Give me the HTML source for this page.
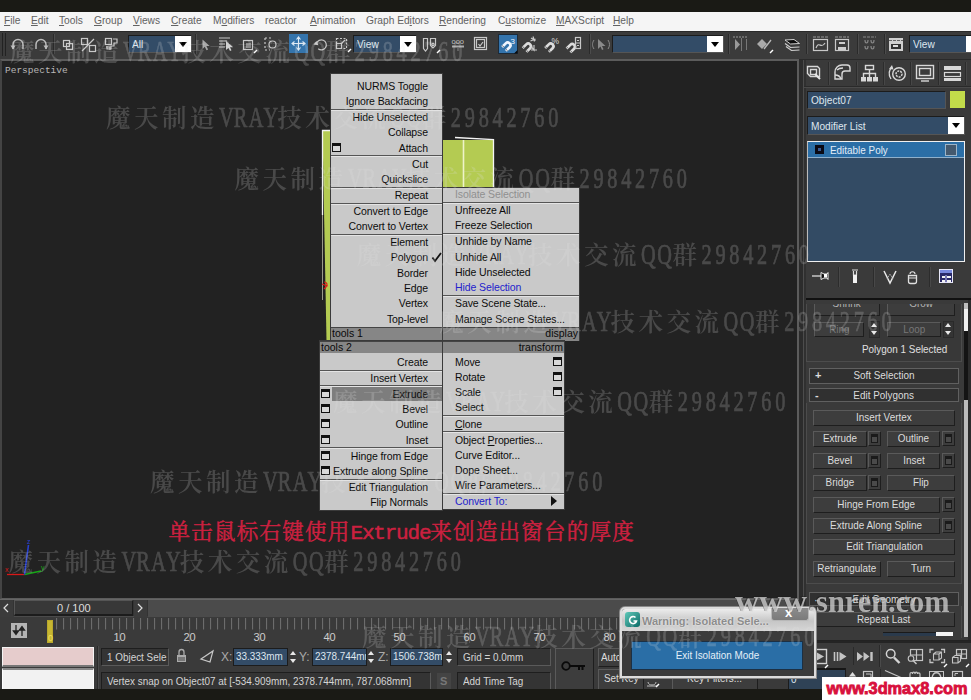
<!DOCTYPE html><html><head><meta charset="utf-8"><title>3ds Max</title><style>
*{box-sizing:border-box;margin:0;padding:0}
html,body{width:971px;height:700px;overflow:hidden;background:#222}
body{position:relative;font-family:"Liberation Sans",sans-serif;font-size:11px;color:#d8d8d8}
.a{position:absolute}
.t{position:absolute;white-space:nowrap;line-height:14px}
.mb span{position:absolute;top:1px;line-height:16px;color:#626262;font-size:10.2px;white-space:nowrap}
.mb u{text-decoration:underline}
.dd{position:absolute;background:#334c67;border:1px solid #1c1c1c;border-right-color:#555;border-bottom-color:#555}
.dd .ar{position:absolute;right:0;top:0;bottom:0;width:16px;background:#fff}
.dd .ar:after{content:"";position:absolute;left:4px;top:6px;border:4px solid transparent;border-top:5px solid #000;border-bottom:0}
.dd .tx{position:absolute;left:3px;top:1px;color:#dfe6ee;font-size:11px;line-height:14px;transform:scaleX(.92);transform-origin:left}
.qm{position:absolute;background:#c9c9c9;border:1px solid #3a3a3a;color:#0c0c0c;font-size:10.5px}
.qm .i{position:absolute;white-space:nowrap;line-height:14px;letter-spacing:-0.1px}
.qm .s{position:absolute;left:0;right:0;height:2px;background:#555;border-bottom:1px solid #e4e4e4}
.qm .ti{position:absolute;left:0;right:0;background:#868686;color:#0a0a0a;font-size:10.5px;line-height:11px;border-top:1px solid #444}
.qm .bx{position:absolute;width:9px;height:9px;border:1px solid #111;border-top:3px solid #111;background:#d8d8d8}
.btn{position:absolute;background:#3d3d3d;border:1px solid #5a5a5a;border-right-color:#1e1e1e;border-bottom-color:#1e1e1e;color:#dcdcdc;text-align:center;font-size:11px;line-height:13px;white-space:nowrap;overflow:hidden}
.sb{position:absolute;background:#3d3d3d;border:1px solid #5a5a5a;border-right-color:#1e1e1e;border-bottom-color:#1e1e1e}
.sb:after{content:"";position:absolute;left:2px;top:2px;right:2px;bottom:2px;border:1px solid #1a1a1a;border-top:3px solid #1a1a1a;background:#4a4a4a}
.ro{position:absolute;background:#303030;border:1px solid #606060;color:#dcdcdc;text-align:center;font-size:11px;line-height:12px}
.ro b{position:absolute;left:5px;top:0;font-weight:bold}
.fld{position:absolute;background:#343434;border:1px solid #1e1e1e;border-right-color:#5a5a5a;border-bottom-color:#5a5a5a;color:#d4d4d4;font-size:11px;line-height:16px;white-space:nowrap;overflow:hidden;padding-left:5px}
.num{position:absolute;background:#334c67;border:1px solid #1c1c1c;color:#dfe6ee;font-size:11px;line-height:15px;white-space:nowrap;overflow:hidden;padding-left:2px}
.sp{position:absolute;width:7px;height:14px}
.sp:before{content:"";position:absolute;left:0;top:1px;border:3.5px solid transparent;border-bottom:4px solid #e8e8e8;border-top:0}
.sp:after{content:"";position:absolute;left:0;bottom:1px;border:3.5px solid transparent;border-top:4px solid #e8e8e8;border-bottom:0}
.n{display:inline-block;transform:scaleX(.9)}
</style></head><body>
<div class="a" style="left:0;top:0;width:971px;height:12px;background:#1a1a15"></div>
<div class="a mb" style="left:0;top:12px;width:971px;height:19px;background:#f5f5f5">
<span style="left:4px"><u>F</u>ile</span>
<span style="left:31px"><u>E</u>dit</span>
<span style="left:59px"><u>T</u>ools</span>
<span style="left:94px"><u>G</u>roup</span>
<span style="left:133px"><u>V</u>iews</span>
<span style="left:171px"><u>C</u>reate</span>
<span style="left:213px">M<u>o</u>difiers</span>
<span style="left:265px">reactor</span>
<span style="left:310px"><u>A</u>nimation</span>
<span style="left:366px">Graph Ed<u>i</u>tors</span>
<span style="left:439px"><u>R</u>endering</span>
<span style="left:498px">C<u>u</u>stomize</span>
<span style="left:556px"><u>M</u>AXScript</span>
<span style="left:613px"><u>H</u>elp</span>
</div>
<div class="a" style="left:0;top:31px;width:971px;height:28px;background:#3b3b3b;border-top:1px solid #2a2a2a"></div>
<div class="a" style="left:0;top:59px;width:799px;height:540px;background:#222;border:2px solid #5c5c5c;border-left:2px solid #444;border-bottom-width:1px"></div>
<div class="t" style="left:5px;top:64px;font-family:'Liberation Mono',monospace;font-size:9.5px;color:#b8b8b8">Perspective</div>
<svg class="a" style="left:300px;top:120px" width="220" height="230" viewBox="300 120 220 230"><path d="M322.500 130.500H331V341H326.500z" fill="#b4cb52"/><path d="M322.5 215V130.5H331" fill="none" stroke="#f2f2f2" stroke-width="1.3"/><path d="M322.5 215V300" fill="none" stroke="#9a9a8a" stroke-width="1"/><rect x="442" y="140" width="51" height="48" fill="#b4cb52"/><path d="M463.5 140V188" stroke="#eef3c8" stroke-width="1.6"/><path d="M455 137.5L493.5 139.5V187" fill="none" stroke="#f4f4f4" stroke-width="1.3"/><path d="M322 284l5 2-3 3M324 282c3 0 4 3 2 5" fill="none" stroke="#e01818" stroke-width="1.2"/></svg>
<svg class="a" style="left:2px;top:538px" width="50" height="42" viewBox="2 538 50 42"><path d="M24.500 574.500H7" stroke="#d81818" stroke-width="1.300"/><path d="M24.500 574.500L41 571" stroke="#18a818" stroke-width="1.300"/><path d="M24.500 574.500L28.500 545" stroke="#2840d0" stroke-width="1.600"/><text x="5" y="572" font-family="Liberation Sans,sans-serif" font-size="7" fill="#d81818">x</text><text x="41" y="570" font-family="Liberation Sans,sans-serif" font-size="7" fill="#18a818">y</text><text x="27" y="544" font-family="Liberation Sans,sans-serif" font-size="7" fill="#2840d0">z</text></svg>
<div class="qm" style="left:330px;top:73px;width:113px;height:268px">
<div class="i" style="top:5px;right:14px;">NURMS Toggle</div>
<div class="i" style="top:20px;right:14px;">Ignore Backfacing</div>
<div class="s" style="top:35px"></div>
<div class="i" style="top:36px;right:14px;">Hide Unselected</div>
<div class="i" style="top:51px;right:14px;">Collapse</div>
<div class="i" style="top:67px;right:14px;">Attach</div>
<div class="bx" style="left:1px;top:69px"></div>
<div class="s" style="top:81px"></div>
<div class="i" style="top:83px;right:14px;">Cut</div>
<div class="i" style="top:98px;right:14px;">Quickslice</div>
<div class="s" style="top:113px"></div>
<div class="i" style="top:114px;right:14px;">Repeat</div>
<div class="s" style="top:129px"></div>
<div class="i" style="top:130px;right:14px;">Convert to Edge</div>
<div class="i" style="top:145px;right:14px;">Convert to Vertex</div>
<div class="s" style="top:160px"></div>
<div class="i" style="top:161px;right:14px;">Element</div>
<div class="i" style="top:176px;right:14px;">Polygon</div>
<div class="i" style="top:192px;right:14px;">Border</div>
<div class="i" style="top:207px;right:14px;">Edge</div>
<div class="i" style="top:222px;right:14px;">Vertex</div>
<div class="i" style="top:238px;right:14px;">Top-level</div>
<div class="ti" style="top:253px;height:14px;text-align:left;padding:0 1px">tools 1</div>
</div>
<svg class="a" style="left:431px;top:251px" width="12" height="12" viewBox="0 0 12 12"><path d="M1.5 6.5L4 10L10 2" fill="none" stroke="#111" stroke-width="1.8"/></svg>
<div class="qm" style="left:442px;top:187px;width:138px;height:154px">
<div class="i" style="top:-1px;left:12px;color:#909090;">Isolate Selection</div>
<div class="s" style="top:14px"></div>
<div class="i" style="top:15px;left:12px;">Unfreeze All</div>
<div class="i" style="top:30px;left:12px;">Freeze Selection</div>
<div class="s" style="top:45px"></div>
<div class="i" style="top:46px;left:12px;">Unhide by Name</div>
<div class="i" style="top:62px;left:12px;">Unhide All</div>
<div class="i" style="top:77px;left:12px;">Hide Unselected</div>
<div class="i" style="top:92px;left:12px;color:#2222cc;">Hide Selection</div>
<div class="s" style="top:107px"></div>
<div class="i" style="top:108px;left:12px;">Save Scene State...</div>
<div class="i" style="top:124px;left:12px;">Manage Scene States...</div>
<div class="ti" style="top:139px;height:14px;text-align:right;padding:0 1px">display</div>
</div>
<div class="qm" style="left:319px;top:340px;width:124px;height:171px">
<div class="ti" style="top:0px;height:12px;text-align:left;padding:0 1px">tools 2</div>
<div class="i" style="top:14px;right:14px;">Create</div>
<div class="s" style="top:29px"></div>
<div class="i" style="top:30px;right:14px;">Insert Vertex</div>
<div class="s" style="top:44px"></div>
<div class="a" style="left:12px;right:0;top:46px;height:14px;background:#7d7d7d"></div>
<div class="i" style="top:46px;right:14px;">Extrude</div>
<div class="bx" style="left:1px;top:48px"></div>
<div class="i" style="top:61px;right:14px;">Bevel</div>
<div class="bx" style="left:1px;top:63px"></div>
<div class="i" style="top:76px;right:14px;">Outline</div>
<div class="bx" style="left:1px;top:78px"></div>
<div class="i" style="top:92px;right:14px;">Inset</div>
<div class="bx" style="left:1px;top:94px"></div>
<div class="s" style="top:106px"></div>
<div class="i" style="top:108px;right:14px;">Hinge from Edge</div>
<div class="bx" style="left:1px;top:110px"></div>
<div class="i" style="top:123px;right:14px;">Extrude along Spline</div>
<div class="bx" style="left:1px;top:125px"></div>
<div class="s" style="top:138px"></div>
<div class="i" style="top:139px;right:14px;">Edit Triangulation</div>
<div class="i" style="top:154px;right:14px;">Flip Normals</div>
</div>
<div class="qm" style="left:442px;top:340px;width:123px;height:170px">
<div class="ti" style="top:0px;height:12px;text-align:right;padding:0 1px">transform</div>
<div class="i" style="top:14px;left:12px;">Move</div>
<div class="bx" style="right:2px;top:16px"></div>
<div class="i" style="top:29px;left:12px;">Rotate</div>
<div class="bx" style="right:2px;top:31px"></div>
<div class="i" style="top:44px;left:12px;">Scale</div>
<div class="bx" style="right:2px;top:46px"></div>
<div class="i" style="top:59px;left:12px;">Select</div>
<div class="s" style="top:74px"></div>
<div class="i" style="top:76px;left:12px;"><u>C</u>lone</div>
<div class="s" style="top:90px"></div>
<div class="i" style="top:92px;left:12px;">Object <u>P</u>roperties...</div>
<div class="i" style="top:107px;left:12px;">Curve Editor...</div>
<div class="i" style="top:122px;left:12px;">Dope Sheet...</div>
<div class="i" style="top:137px;left:12px;">Wire Parameters...</div>
<div class="s" style="top:152px"></div>
<div class="i" style="top:153px;left:12px;color:#2222cc;">Convert To:</div>
</div>
<div class="a" style="left:551px;top:496px;border:5px solid transparent;border-left:6px solid #111;border-right:0"></div>
<svg class="a" style="left:160px;top:512px" width="490" height="36" viewBox="160 512 490 36">
<text y="538.500" font-size="21.500" fill="#cc2040" stroke="#cc2040" stroke-width="0.500" font-family="'Liberation Serif','Noto Serif CJK SC',serif"><tspan x="168.5 191.2 214.0 236.8 259.5 282.2 305.0 327.8">单击鼠标右键使用</tspan><tspan font-size="21" font-family="'Liberation Mono',monospace" x="350.5 361.9 373.3 384.7 396.1 407.5 418.9">Extrude</tspan><tspan x="430.3 453.0 475.8 498.5 521.3 544.0 566.8 589.5 612.3">来创造出窗台的厚度</tspan></text>
</svg>
<div class="dd" style="left:128px;top:35px;width:64px;height:18px"><span class="tx">All</span><span class="ar"></span></div>
<div class="dd" style="left:353px;top:35px;width:64px;height:18px"><span class="tx">View</span><span class="ar"></span></div>
<div class="dd" style="left:612px;top:35px;width:112px;height:18px"><span class="ar"></span></div>
<div class="dd" style="left:909px;top:35px;width:62px;height:18px;border-right:0"><span class="tx">View</span><span class="a" style="right:0;top:0;bottom:0;width:5px;background:#fff"></span></div>
<div class="a" style="left:289px;top:34px;width:19px;height:19px;background:#3474ac"></div>
<div class="a" style="left:498px;top:34px;width:20px;height:20px;background:#3474ac;border:1px solid #1c2a38"></div>
<div class="a" style="left:2px;top:33px;width:1px;height:23px;background:#222"></div><div class="a" style="left:5px;top:33px;width:1px;height:23px;background:#222"></div>
<svg class="a" style="left:0;top:30px" width="971" height="29" viewBox="0 30 971 29">
<path d="M13 49v-4.500a5 5 0 0 1 10 0v4.500" stroke="#bcbcbc" fill="none" stroke-width="1.500"/><path d="M10.500 45.500l2.500 4 2.500-4z" fill="#bcbcbc"/>
<path d="M36 49v-4.500a5 5 0 0 1 10 0v4.500" stroke="#bcbcbc" fill="none" stroke-width="1.500"/><path d="M43.500 45.500l2.500 4 2.500-4z" fill="#bcbcbc"/>
<rect x="63.5" y="40.500" width="6" height="6" stroke="#c8c8c8" fill="none" stroke-width="1.200"/><rect x="66.500" y="43.500" width="6" height="6" stroke="#c8c8c8" fill="none" stroke-width="1.200"/>
<rect x="81.500" y="38.500" width="6" height="6" stroke="#c8c8c8" fill="none" stroke-width="1.200"/><rect x="89.500" y="45.500" width="6" height="6" stroke="#c8c8c8" fill="none" stroke-width="1.200"/><path d="M94 39L82 51" stroke="#c8c8c8" fill="none" stroke-width="1.200"/>
<rect x="105.500" y="38.500" width="6" height="6" stroke="#c8c8c8" fill="none" stroke-width="1.200"/><path d="M113 39h4v4h-3v3h-3v3h-4v-3" stroke="#c8c8c8" fill="none" stroke-width="1.200"/><path d="M106 47h4v3" stroke="#c8c8c8" fill="none" stroke-width="1.200"/>
<path d="M202.500 39.500v9.500l2.300-2.200 1.700 3.400 1.600-.8-1.700-3.300h3.200z" fill="#a8a8a8"/>
<path d="M219 38h11M219 41h8M219 44h6M219 47h6" stroke="#c8c8c8" fill="none" stroke-width="1.200"/><path d="M226 41v9l2.500-2 1.500 3 1.500-.7-1.500-3h3z" fill="#d0d0d0"/>
<rect x="243.500" y="40.500" width="9" height="9" stroke="#c8c8c8" fill="none" stroke-width="1.200"/><rect x="246" y="43" width="5" height="5" fill="#888"/><path d="M254 53l3-3" stroke="#fff" stroke-width="1.500"/>
<path d="M265 38v12M265 38h8M265 50h5" stroke="#c8c8c8" fill="none" stroke-width="1.200" stroke-dasharray="2 2"/><circle cx="272.500" cy="44.500" r="3.500" stroke="#c8c8c8" fill="none" stroke-width="1.200"/>
<path d="M298.500 37.500v12M292.500 43.500h12M296.500 39.500l2-2.500 2 2.500M296.500 47.500l2 2.500 2-2.500M294.500 41.500l-2.500 2 2.500 2M302.500 41.500l2.500 2-2.500 2" stroke="#dce8f4" fill="none" stroke-width="1.100"/>
<path d="M316.500 43.500a5 5 0 1 1 1.700 5.300" stroke="#c8c8c8" fill="none" stroke-width="1.200"/><path d="M313.500 44.500l3-3.500 2 4.200z" fill="#c8c8c8"/>
<rect x="336.500" y="38.500" width="10" height="10" stroke="#c8c8c8" fill="none" stroke-width="1.200" stroke-dasharray="2 1.500"/><rect x="336.500" y="43.500" width="5" height="5" stroke="#c8c8c8" fill="none" stroke-width="1.200"/><path d="M341 44l4-4" stroke="#c8c8c8" fill="none" stroke-width="1.200"/><path d="M348 52l3-3" stroke="#fff" stroke-width="1.500"/>
<path d="M423.500 38.500h4v10l-2 2.500-2-2.500z" stroke="#c8c8c8" fill="none" stroke-width="1.200" stroke="#a4a4a4"/><path d="M430.500 38.500h5v7l-2.500 2.500-2.500-2.500z" stroke="#c8c8c8" fill="none" stroke-width="1.200" stroke="#a4a4a4"/><circle cx="433" cy="44.500" r="1.200" stroke="#c8c8c8" fill="none" stroke-width="1.200" stroke="#a4a4a4" stroke-width="0.800"/><path d="M437 53l3-3" stroke="#fff" stroke-width="1.500"/>
<text x="451.500" y="43.500" font-size="7.500" fill="#c4c4c4" font-family="Liberation Sans,sans-serif">ooo</text><path d="M452 46.500h12" stroke="#aaa" stroke-width="2" fill="none"/><path d="M458 48v3" stroke="#888" fill="none"/>
<rect x="474.500" y="37.500" width="12" height="12" stroke="#c8c8c8" fill="none" stroke-width="1.200" stroke="#bbb"/><rect x="476.500" y="39.500" width="8" height="8" stroke="#c8c8c8" fill="none" stroke-width="1.200" stroke="#aaa"/><path d="M478.500 44l1.500 2 3-4" stroke="#c8c8c8" fill="none" stroke-width="1.200" stroke="#888" stroke-width="1"/>
<g transform="translate(507 46) rotate(45)"><path d="M-2.700 4.200V-1a2.700 2.700 0 0 1 5.400 0V4.200" stroke="#f0f6ff" fill="none" stroke-width="2.700"/><path d="M-4 3h2.600M1.400 3h2.600" stroke="#555" stroke-width="0.800"/></g>
<text x="510.500" y="44" font-size="8" fill="#f0f6ff" font-family="Liberation Sans,sans-serif">3</text><path d="M514 53.500l3.500-3.500v3.500z" fill="#0a0a0a"/>
<g transform="translate(527.5 47) rotate(45)"><path d="M-2.700 4.200V-1a2.700 2.700 0 0 1 5.400 0V4.200" stroke="#dcdcdc" fill="none" stroke-width="2.700"/><path d="M-4 3h2.600M1.400 3h2.600" stroke="#555" stroke-width="0.800"/></g>
<path d="M533 36.500l1.500 5M531 38l4.500 2.500M530.500 41l5-2M531 50h6M534 45v5l-2.500-3" stroke="#c8c8c8" fill="none" stroke-width="1.200" stroke-width="1"/>
<g transform="translate(550 47) rotate(45)"><path d="M-2.700 4.200V-1a2.700 2.700 0 0 1 5.400 0V4.200" stroke="#dcdcdc" fill="none" stroke-width="2.700"/><path d="M-4 3h2.600M1.400 3h2.600" stroke="#555" stroke-width="0.800"/></g>
<text x="551.500" y="44" font-size="8.500" fill="#ddd" font-family="Liberation Sans,sans-serif">%</text>
<g transform="translate(571.5 47.5) rotate(45)"><path d="M-2.700 4.200V-1a2.700 2.700 0 0 1 5.400 0V4.200" stroke="#dcdcdc" fill="none" stroke-width="2.700"/><path d="M-4 3h2.600M1.400 3h2.600" stroke="#555" stroke-width="0.800"/></g>
<rect x="575.500" y="37.500" width="5" height="11" stroke="#c8c8c8" fill="none" stroke-width="1.200" stroke-width="1"/><path d="M576 43h5M577 40.500h2M577 45.500h2" stroke="#c8c8c8" fill="none" stroke-width="1.200" stroke-width="1"/>
<path d="M594 40c-2 3-2 6 0 9M608 40c2 3 2 6 0 9" stroke="#8a8a8a" fill="none"/><path d="M598 39v10l2.500-2.500 1.500 3.500 1.500-.7-1.500-3.300h3.500z" fill="#8a8a8a"/>
<path d="M53.5 34v20" stroke="#2a2a2a"/><path d="M54.5 34v20" stroke="#4c4c4c"/>
<path d="M195.5 34v20" stroke="#2a2a2a"/><path d="M196.5 34v20" stroke="#4c4c4c"/>
<path d="M589.5 34v20" stroke="#2a2a2a"/><path d="M590.5 34v20" stroke="#4c4c4c"/>
<path d="M728.5 34v20" stroke="#2a2a2a"/><path d="M729.5 34v20" stroke="#4c4c4c"/>
<path d="M806.5 34v20" stroke="#2a2a2a"/><path d="M807.5 34v20" stroke="#4c4c4c"/>
<path d="M857.5 34v20" stroke="#2a2a2a"/><path d="M858.5 34v20" stroke="#4c4c4c"/>
<path d="M884.5 34v20" stroke="#2a2a2a"/><path d="M885.5 34v20" stroke="#4c4c4c"/>
<path d="M733 37h14" stroke="#999" stroke-dasharray="2 1"/><path d="M735 39v11l5-5.500z" fill="#999"/><path d="M741.500 38v13" stroke="#777"/><path d="M746.500 39v11" stroke="#777"/>
<path d="M757 44l5-5 5 5-5 5z" fill="#aaa"/><path d="M764 49l7-9" stroke="#bbb" stroke-width="1.300"/><path d="M770 53l3-3" stroke="#fff" stroke-width="1.500"/>
<path d="M785 40l9-.500 5.500 4-9 .500z" fill="#0c0c0c" stroke="#cfcfcf" stroke-width="1"/><path d="M785 43.500l5.500 4 9-.500M786 46.500l5.500 4 8-.500" fill="none" stroke="#cfcfcf" stroke-width="1.200"/>
<rect x="813.500" y="39.500" width="14" height="11" stroke="#c8c8c8" fill="none" stroke-width="1.200" stroke="#c8c8c8"/><path d="M813 37h15" stroke="#999" stroke-dasharray="3 1"/><path d="M816 48c3-8 5 2 9-5" stroke="#c8c8c8" fill="none" stroke-width="1.200" stroke="#aaa" stroke-width="1"/>
<rect x="835.500" y="39.500" width="13" height="11" stroke="#c8c8c8" fill="none" stroke-width="1.200" stroke="#c8c8c8"/><path d="M835 37h14" stroke="#999" stroke-dasharray="3 1"/><path d="M839 42h6v2h-6zM842 44v3M838 47h8v3h-8z" fill="#ccc" stroke="none"/>
<path d="M863 37h13" stroke="#888" stroke-dasharray="3 1"/><path d="M865 40c0 4 3 4 3 0M871 40c0 4 3 4 3 0M865 46c0 4 3 4 3 0M871 46c0 4 3 4 3 0" stroke="#888" fill="none" stroke-width="1.200"/>
<rect x="889" y="38" width="14" height="13" fill="#d0d0d0"/><path d="M889 40.500h14" stroke="#666" stroke-dasharray="3 1"/><rect x="891" y="44" width="10" height="5" fill="#333"/><rect x="893" y="45" width="5" height="2" fill="#ddd"/>
</svg>
<div class="a" style="left:799px;top:59px;width:172px;height:641px;background:#3a3a3a"></div>
<div class="a" style="left:799px;top:59px;width:172px;height:1px;background:#2a2a2a"></div>
<div class="a" style="left:799px;top:60px;width:4px;height:581px;background:#2c2c2c"></div><div class="a" style="left:803px;top:60px;width:1px;height:581px;background:#4c4c4c"></div><div class="a" style="left:804px;top:60px;width:2px;height:581px;background:#303030"></div>
<div class="a" style="left:804px;top:86px;width:167px;height:1px;background:#2a2a2a"></div>
<div class="a" style="left:804px;top:87px;width:167px;height:1px;background:#4a4a4a"></div>
<div class="a" style="left:828px;top:62px;width:1px;height:23px;background:#2c2c2c"></div><div class="a" style="left:829px;top:62px;width:1px;height:23px;background:#474747"></div>
<div class="a" style="left:856px;top:62px;width:1px;height:23px;background:#2c2c2c"></div><div class="a" style="left:857px;top:62px;width:1px;height:23px;background:#474747"></div>
<div class="a" style="left:883px;top:62px;width:1px;height:23px;background:#2c2c2c"></div><div class="a" style="left:884px;top:62px;width:1px;height:23px;background:#474747"></div>
<div class="a" style="left:910px;top:62px;width:1px;height:23px;background:#2c2c2c"></div><div class="a" style="left:911px;top:62px;width:1px;height:23px;background:#474747"></div>
<div class="a" style="left:938px;top:62px;width:1px;height:23px;background:#2c2c2c"></div><div class="a" style="left:939px;top:62px;width:1px;height:23px;background:#474747"></div>
<div class="a" style="left:965px;top:62px;width:1px;height:23px;background:#2c2c2c"></div><div class="a" style="left:966px;top:62px;width:1px;height:23px;background:#474747"></div>
<svg class="a" style="left:799px;top:60px" width="172" height="28" viewBox="799 60 172 28">
<path d="M807.500 66.500h10l2 2v8h-9l-3-3z" stroke="#d8d8d8" fill="none" stroke-width="1.400"/><path d="M810.500 69.500h6v5h-6z" stroke="#d8d8d8" fill="none" stroke-width="1.400" stroke-width="1.100"/><path d="M815 74l5 5" stroke="#e8e8e8" stroke-width="2"/>
<path d="M835 79v-7a7 7 0 0 1 7-7h5a3 3 0 0 1 3 3v3h-5a3 3 0 0 0-3 3v5z" stroke="#d8d8d8" fill="none" stroke-width="1.400"/><path d="M837 70c2-2 4-2 6-2M841 79c-1-3-3-4-6-4" stroke="#d8d8d8" fill="none" stroke-width="1.400" stroke-width="1"/>
<rect x="865.500" y="65.500" width="8" height="4" stroke="#d8d8d8" fill="none" stroke-width="1.400" stroke-width="1.100"/><path d="M869.500 70v3.500M863.500 77v-3.500h12v3.500M869.500 73.500v3.500" stroke="#d8d8d8" fill="none" stroke-width="1.400" stroke-width="1.100"/><rect x="861" y="77" width="5" height="4.500" fill="#d8d8d8"/><rect x="867" y="77" width="5" height="4.500" fill="#d8d8d8"/><rect x="873" y="77" width="5" height="4.500" fill="#d8d8d8"/>
<circle cx="899" cy="74" r="6.300" stroke="#d8d8d8" fill="none" stroke-width="1.400" stroke-width="1.200"/><circle cx="899" cy="74" r="3" stroke="#d8d8d8" fill="none" stroke-width="1.400" stroke-width="1" stroke-dasharray="2 1"/><path d="M891 79c-3-5-2-9 1-12" stroke="#d8d8d8" fill="none" stroke-width="1.400" stroke-width="1.100"/><path d="M889 69l3-4 1.500 4.500z" fill="#d8d8d8"/>
<rect x="916.500" y="65.500" width="17" height="13" stroke="#d8d8d8" fill="none" stroke-width="1.400" stroke-width="1.700"/><rect x="919.500" y="68.500" width="11" height="7" stroke="#d8d8d8" fill="none" stroke-width="1.400" stroke-width="1" stroke="#aaa"/><path d="M921 81h8" stroke="#d8d8d8" fill="none" stroke-width="1.400" stroke-width="1.600"/>
<rect x="944" y="66" width="17" height="4" fill="#d8d8d8"/><rect x="944.500" y="72.500" width="16" height="4" stroke="#d8d8d8" fill="none" stroke-width="1.200"/><rect x="944" y="78" width="17" height="3" fill="#d8d8d8"/>
</svg>
<div class="dd" style="left:807px;top:91px;width:139px;height:18px"><span class="tx n" style="top:1px;font-size:11px;transform-origin:left">Object07</span></div>
<div class="a" style="left:950px;top:91px;width:15px;height:17px;background:#c2dc4a"></div>
<div class="dd" style="left:807px;top:116px;width:158px;height:19px"><span class="tx n" style="top:2px;font-size:11px;transform-origin:left">Modifier List</span><span class="ar" style="width:16px"></span></div>
<div class="a" style="left:807px;top:141px;width:158px;height:121px;background:#334b64;border:1px solid #f0f0f0;border-left-color:#bbb"></div>
<div class="a" style="left:808px;top:142px;width:156px;height:16px;background:#2b6ea6;border-bottom:1px solid #8fb0cc"></div>
<div class="a" style="left:815px;top:145px;width:9px;height:9px;background:#0a0a14"></div><div class="a" style="left:818px;top:148px;width:3px;height:3px;background:#3a5a90"></div>
<div class="t" style="left:830px;top:143px;color:#e2ecf6;font-size:11px"><span class="n" style="transform-origin:left">Editable Poly</span></div>
<div class="a" style="left:945px;top:144px;width:12px;height:12px;border:1px solid #9cb4c8;background:#44596e"></div>
<svg class="a" style="left:805px;top:262px" width="166" height="36" viewBox="805 262 166 36">
<path d="M812 276h9" stroke="#e8e8e8" stroke-width="1.200"/><path d="M821 272.500l3 1.500h3l1-1.500v7l-1-1.500h-3l-3 1.500z" fill="#111" stroke="#e8e8e8" stroke-width="1"/><rect x="824" y="274" width="3" height="3.500" fill="#fff"/>
<path d="M838.500 267v20M873.500 267v20M929.500 267v20" stroke="#2c2c2c"/><path d="M839.500 267v20M874.500 267v20M930.500 267v20" stroke="#484848"/>
<path d="M852 270h6M853.500 271v4h3v-4" stroke="#ddd" fill="none" stroke-width="1.200"/><rect x="853" y="275" width="4" height="8" fill="#f2f2f2"/>
<path d="M884 271l6 12 6-12" stroke="#e8e8e8" fill="none" stroke-width="1.500"/><path d="M887 279l3-5 3 5" stroke="#bbb" fill="none" stroke-width="1" stroke-dasharray="1.500 1"/>
<path d="M908.500 275.500h8v6a2 2 0 0 1-2 2h-4a2 2 0 0 1-2-2z" stroke="#e0e0e0" fill="none" stroke-width="1.300"/><path d="M910 274c0-3 5-3 5 0M908 278h9" stroke="#e0e0e0" fill="none" stroke-width="1.100"/>
<rect x="939.500" y="269.500" width="13" height="13" fill="#2a2a6a" stroke="#e8e8f8" stroke-width="1"/><rect x="940" y="270" width="12" height="3" fill="#7a8ae0"/><path d="M942 276h3v2h-3zM947 276h4v2h-4zM942 280h3v2h-3zM947 280h4v2h-4z" fill="#f4f4f4"/><path d="M946 275v8" stroke="#c8c8ff"/>
</svg>
<div class="a" style="left:806px;top:298px;width:165px;height:2px;background:#111"></div>
<div class="a" style="left:806px;top:304px;width:156px;height:58px;border:1px solid #4c4c4c;border-top:0;background:#383838"></div>
<div class="a" style="left:806px;top:304px;width:156px;height:14px;overflow:hidden"><div class="btn" style="left:8px;top:-5px;width:66px;height:17px;color:#b4b4b4"><span class="n" style="position:relative;top:-3px">Shrink</span></div><div class="btn" style="left:81px;top:-5px;width:68px;height:17px;color:#b4b4b4"><span class="n" style="position:relative;top:-3px">Grow</span></div></div>
<div class="btn" style="left:814px;top:322px;width:50px;height:15px;color:#777"><span class="n">Ring</span></div>
<div class="a" style="left:869px;top:321px;width:11px;height:17px;background:#343434;border:1px solid #2a2a2a"></div><div class="sp" style="left:871px;top:322px"></div>
<div class="btn" style="left:887px;top:322px;width:54px;height:15px;color:#777"><span class="n">Loop</span></div>
<div class="a" style="left:943px;top:321px;width:11px;height:17px;background:#343434;border:1px solid #2a2a2a"></div><div class="sp" style="left:945px;top:322px"></div>
<div class="t" style="left:862px;top:342px;color:#e0e0e0;font-size:11px"><span class="n" style="transform-origin:left">Polygon 1 Selected</span></div>
<div class="a" style="left:964px;top:303px;width:4px;height:334px;background:#bdbdbd"></div>
<div class="a" style="left:964px;top:309px;width:4px;height:22px;background:#f0f0f0"></div>
<div class="a" style="left:964px;top:331px;width:4px;height:69px;background:#141414"></div>
<div class="a" style="left:968px;top:300px;width:3px;height:341px;background:#2c2c2c"></div>
<div class="ro" style="left:809px;top:368px;width:150px;height:16px"><b>+</b><span class="n">Soft Selection</span></div>
<div class="ro" style="left:809px;top:388px;width:150px;height:14px"><b>-</b><span class="n">Edit Polygons</span></div>
<div class="a" style="left:806px;top:403px;width:156px;height:181px;border:1px solid #4c4c4c;border-top:0"></div>
<div class="btn" style="left:813px;top:410px;width:142px;height:16px"><span class="n">Insert Vertex</span></div>
<div class="btn" style="left:813px;top:431px;width:54px;height:16px"><span class="n">Extrude</span></div>
<div class="sb" style="left:868px;top:431px;width:13px;height:15px"></div>
<div class="btn" style="left:887px;top:431px;width:53px;height:16px"><span class="n">Outline</span></div>
<div class="sb" style="left:942px;top:431px;width:13px;height:15px"></div>
<div class="btn" style="left:813px;top:453px;width:54px;height:16px"><span class="n">Bevel</span></div>
<div class="sb" style="left:868px;top:453px;width:13px;height:15px"></div>
<div class="btn" style="left:887px;top:453px;width:53px;height:16px"><span class="n">Inset</span></div>
<div class="sb" style="left:942px;top:453px;width:13px;height:15px"></div>
<div class="btn" style="left:813px;top:475px;width:54px;height:16px"><span class="n">Bridge</span></div>
<div class="sb" style="left:868px;top:475px;width:13px;height:15px"></div>
<div class="btn" style="left:887px;top:475px;width:68px;height:16px"><span class="n">Flip</span></div>
<div class="btn" style="left:813px;top:497px;width:127px;height:16px"><span class="n">Hinge From Edge</span></div>
<div class="sb" style="left:942px;top:497px;width:13px;height:15px"></div>
<div class="btn" style="left:813px;top:518px;width:127px;height:16px"><span class="n">Extrude Along Spline</span></div>
<div class="sb" style="left:942px;top:518px;width:13px;height:15px"></div>
<div class="btn" style="left:813px;top:539px;width:142px;height:16px"><span class="n">Edit Triangulation</span></div>
<div class="btn" style="left:813px;top:561px;width:68px;height:16px"><span class="n">Retriangulate</span></div>
<div class="btn" style="left:887px;top:561px;width:68px;height:16px"><span class="n">Turn</span></div>
<div class="ro" style="left:809px;top:592px;width:150px;height:14px"><b>-</b><span class="n">Edit Geometry</span></div>
<div class="a" style="left:806px;top:606px;width:156px;height:32px;border:1px solid #4c4c4c;border-top:0;border-bottom:0"></div>
<div class="btn" style="left:813px;top:612px;width:142px;height:15px"><span class="n">Repeat Last</span></div>
<div class="a" style="left:883px;top:632px;width:70px;height:4px;background:#2a3a4c;border-top:1px solid #1a1a1a"></div><div class="a" style="left:936px;top:632px;width:17px;height:4px;background:#f4f4f4"></div>
<div class="a" style="left:799px;top:640px;width:172px;height:1px;background:#222"></div>
<div class="a" style="left:0;top:599px;width:799px;height:18px;background:#4b4b4b;border-top:1px solid #666"></div>
<div class="a" style="left:0;top:600px;width:14px;height:17px;background:#3b3b3b"></div><div class="a" style="left:134px;top:600px;width:14px;height:17px;background:#3b3b3b"></div>
<div class="a" style="left:14px;top:600px;width:119px;height:16px;background:#383838;border:1px solid #555;border-right-color:#1c1c1c;border-bottom:2px solid #1c1c1c"></div>
<div class="t" style="left:57px;top:601px;color:#ddd;font-size:11px">0 / 100</div>
<svg class="a" style="left:0;top:600px" width="150" height="16" viewBox="0 0 150 16"><path d="M8 4L4 8l4 4M138 4l4 4-4 4" stroke="#ddd" fill="none" stroke-width="1.200"/><path d="M13.500 0v16M133.500 0v16M147.500 0v16" stroke="#333"/></svg>
<div class="a" style="left:0;top:617px;width:799px;height:29px;background:#3a3a3a"></div>
<svg class="a" style="left:0;top:617px" width="799" height="29" viewBox="0 617 799 29">
<rect x="11" y="623" width="16" height="15" fill="#b4b4b4"/><path d="M16 625v9M13.500 631l2.500 3.500 2.500-3.500z M22 636v-9M19.500 630l2.500-3.500 2.500 3.500z" stroke="#222" fill="#222" stroke-width="1.300"/>
<rect x="47" y="620" width="6" height="23" fill="#b9a82c"/><rect x="48" y="621" width="4" height="21" fill="#d6c436" opacity=".5"/>
<text x="48" y="641" font-size="9" fill="#f0e060" font-family="Liberation Sans,sans-serif">0</text>
<path d="M56.6 618v11.500M63.6 618v11.500M70.6 618v11.500M77.6 618v11.500M84.6 618v11.500M91.6 618v11.500M98.6 618v11.500M105.6 618v11.500M112.6 618v11.500M119.6 618v11.500M126.6 618v11.500M133.6 618v11.500M140.6 618v11.500M147.6 618v11.500M154.6 618v11.500M161.6 618v11.500M168.6 618v11.500M175.6 618v11.500M182.6 618v11.500M189.6 618v11.500M196.6 618v11.500M203.6 618v11.500M210.6 618v11.500M217.6 618v11.500M224.6 618v11.500M231.6 618v11.500M238.6 618v11.500M245.6 618v11.500M252.6 618v11.500M259.6 618v11.500M266.6 618v11.500M273.6 618v11.500M280.6 618v11.500M287.6 618v11.500M294.6 618v11.500M301.6 618v11.500M308.6 618v11.500M315.6 618v11.500M322.6 618v11.500M329.6 618v11.500M336.6 618v11.500M343.6 618v11.500M350.6 618v11.500M357.6 618v11.500M364.6 618v11.500M371.6 618v11.500M378.6 618v11.500M385.6 618v11.500M392.6 618v11.500M399.6 618v11.500M406.6 618v11.500M413.6 618v11.500M420.6 618v11.500M427.6 618v11.500M434.6 618v11.500M441.6 618v11.500M448.6 618v11.500M455.6 618v11.500M462.6 618v11.500M469.6 618v11.500M476.6 618v11.500M483.6 618v11.500M490.6 618v11.500M497.6 618v11.500M504.6 618v11.500M511.6 618v11.500M518.6 618v11.500M525.6 618v11.500M532.6 618v11.500M539.6 618v11.500M546.6 618v11.500M553.6 618v11.500M560.6 618v11.500M567.6 618v11.500M574.6 618v11.500M581.6 618v11.500M588.6 618v11.500M595.6 618v11.500M602.6 618v11.500M609.6 618v11.500M616.6 618v11.500M623.6 618v11.500M630.6 618v11.500M637.6 618v11.500M644.6 618v11.500M651.6 618v11.500M658.6 618v11.500M665.6 618v11.500M672.6 618v11.500M679.6 618v11.500M686.6 618v11.500M693.6 618v11.500M700.6 618v11.500M707.6 618v11.500M714.6 618v11.500M721.6 618v11.500M728.6 618v11.500M735.6 618v11.500M742.6 618v11.500M749.6 618v11.500M756.6 618v11.500M763.6 618v11.500M770.6 618v11.500M777.6 618v11.500M784.6 618v11.500M791.6 618v11.500" stroke="#727272" stroke-width="1"/>
<path d="M119.6 629v14M189.6 629v14M259.6 629v14M329.6 629v14M399.6 629v14M469.6 629v14M539.6 629v14M609.6 629v14M679.6 629v14M749.6 629v14" stroke="#5a5a5a" stroke-width="1"/>
<text x="119.6" y="641" text-anchor="middle" font-size="11" fill="#cdcdcd" font-family="Liberation Sans,sans-serif">10</text>
<text x="189.6" y="641" text-anchor="middle" font-size="11" fill="#cdcdcd" font-family="Liberation Sans,sans-serif">20</text>
<text x="259.6" y="641" text-anchor="middle" font-size="11" fill="#cdcdcd" font-family="Liberation Sans,sans-serif">30</text>
<text x="329.6" y="641" text-anchor="middle" font-size="11" fill="#cdcdcd" font-family="Liberation Sans,sans-serif">40</text>
<text x="399.6" y="641" text-anchor="middle" font-size="11" fill="#cdcdcd" font-family="Liberation Sans,sans-serif">50</text>
<text x="469.6" y="641" text-anchor="middle" font-size="11" fill="#cdcdcd" font-family="Liberation Sans,sans-serif">60</text>
<text x="539.6" y="641" text-anchor="middle" font-size="11" fill="#cdcdcd" font-family="Liberation Sans,sans-serif">70</text>
<text x="609.6" y="641" text-anchor="middle" font-size="11" fill="#cdcdcd" font-family="Liberation Sans,sans-serif">80</text>
</svg>
<div class="a" style="left:0;top:646px;width:822px;height:44px;background:#3a3a3a"></div>
<div class="a" style="left:2px;top:647px;width:92px;height:20px;background:#e6cccc;border:1px solid #f4f4f4;border-bottom:2px solid #777"></div>
<div class="a" style="left:2px;top:668px;width:92px;height:22px;background:#f2f2f2;border:1px solid #fff;border-top:2px solid #888"></div>
<div class="a" style="left:97px;top:646px;width:1px;height:44px;background:#2a2a2a"></div><div class="a" style="left:98px;top:646px;width:1px;height:44px;background:#4a4a4a"></div>
<div class="fld" style="left:101px;top:648px;width:68px;height:18px"><span class="n" style="transform-origin:left">1 Object Sele</span></div>
<div class="fld" style="left:101px;top:672px;width:330px;height:18px"><span class="n" style="transform-origin:left">Vertex snap on Object07 at [-534.909mm, 2378.744mm, 787.068mm]</span></div>
<svg class="a" style="left:170px;top:646px" width="70" height="22" viewBox="170 646 70 22"><rect x="177" y="655" width="9" height="7" fill="#aaa"/><path d="M179 655v-3a2.500 2.500 0 0 1 5 0v3" stroke="#aaa" fill="none" stroke-width="1.300"/><path d="M178 658h7M178 660h7" stroke="#444"/><path d="M201 659l12-8-3 11z" stroke="#c8c8c8" fill="none" stroke-width="1.200"/></svg>
<div class="t" style="left:221px;top:650px;color:#aaa;font-size:12px">X:</div>
<div class="num" style="left:233px;top:648px;width:55px;height:18px"><span class="n" style="transform-origin:left">33.333mm</span></div><div class="sp" style="left:290px;top:650px"></div>
<div class="t" style="left:299px;top:650px;color:#aaa;font-size:12px">Y:</div>
<div class="num" style="left:312px;top:648px;width:55px;height:18px"><span class="n" style="transform-origin:left">2378.744mm</span></div><div class="sp" style="left:368px;top:650px"></div>
<div class="t" style="left:378px;top:650px;color:#aaa;font-size:12px">Z:</div>
<div class="num" style="left:390px;top:648px;width:53px;height:18px"><span class="n" style="transform-origin:left">1506.738mm</span></div><div class="sp" style="left:446px;top:650px"></div>
<div class="fld" style="left:457px;top:648px;width:94px;height:18px"><span class="n" style="transform-origin:left">Grid = 0.0mm</span></div>
<div class="fld" style="left:457px;top:672px;width:94px;height:18px"><span class="n" style="transform-origin:left">Add Time Tag</span></div>
<div class="a" style="left:437px;top:673px;width:14px;height:16px;background:#444"></div><div class="t" style="left:440px;top:674px;color:#777;font-size:11px;font-weight:bold">S</div>
<div class="btn" style="left:555px;top:648px;width:39px;height:42px"></div>
<svg class="a" style="left:560px;top:660px" width="30" height="12" viewBox="0 0 30 12"><circle cx="6" cy="6" r="3.800" stroke="#0a0a0a" fill="none" stroke-width="1.800"/><path d="M10 6h15M19 6v4M22.500 6v4" stroke="#0a0a0a" stroke-width="2" fill="none"/></svg>
<div class="btn" style="left:598px;top:648px;width:60px;height:19px;text-align:left;padding-left:2px;line-height:16px"><span class="n" style="transform-origin:left">Auto Key</span></div>
<div class="btn" style="left:598px;top:669px;width:46px;height:21px;text-align:left;padding-left:5px;line-height:17px"><span class="n" style="transform-origin:left">Set Key</span></div>
<div class="btn" style="left:672px;top:669px;width:86px;height:21px;line-height:17px"><span class="n">Key Filters...</span></div>
<svg class="a" style="left:645px;top:670px" width="16" height="20" viewBox="0 0 16 20"><path d="M3 12c0 4 8 4 8 0M2 16h10" stroke="#bbb" fill="none"/><path d="M11 17l3-3" stroke="#fff" stroke-width="1.500"/></svg>
<div class="a" style="left:799px;top:641px;width:172px;height:2px;background:#242424"></div>
<div class="num" style="left:788px;top:668px;width:58px;height:22px;background:#2f4256;border-top:2px solid #161616"><span class="n" style="transform-origin:left;position:relative;top:2px">0</span></div>
<svg class="a" style="left:799px;top:641px" width="172" height="49" viewBox="799 641 172 49">
<rect x="811.500" y="649.500" width="15" height="14" stroke="#d0d0d0" fill="none" stroke-width="1.400"/><path d="M816 652v9l8-4.500z" fill="#c4c4c4"/><path d="M825 668l3-3" stroke="#fff" stroke-width="1.500"/>
<path d="M834.500 652v9M837.500 652v9" stroke="#c4c4c4" stroke-width="1.600"/><path d="M839.500 652v9l7-4.500z" fill="#c4c4c4"/>
<path d="M853.500 647v18" stroke="#2a2a2a"/><path d="M857 652v9l6-4.500zM863.500 652v9l6-4.500z" fill="#c4c4c4"/><path d="M871.500 652v9" stroke="#c4c4c4" stroke-width="2.400"/>
<path d="M879.500 645v22" stroke="#2a2a2a"/><path d="M880.500 645v22" stroke="#4a4a4a"/>
<circle cx="890.700" cy="653.800" r="4.300" stroke="#d4d4d4" fill="none" stroke-width="1.500"/><path d="M894 657.500l5.500 5.500" stroke="#d4d4d4" stroke-width="2.400"/>
<rect x="910.500" y="649.500" width="12" height="11" stroke="#c4c4c4" fill="none" stroke-width="1.200"/><path d="M916.500 649v12M910 655h13" stroke="#c4c4c4" stroke-width="1.200"/><circle cx="911" cy="658.500" r="2.800" stroke="#c4c4c4" fill="#3a3a3a" stroke-width="1.100"/><path d="M913 660.500l3.500 3.500" stroke="#c4c4c4" stroke-width="1.600"/>
<path d="M930 653v-3.500h3.500M941 649.500h3.500v3.500M930 659v3.500h3.500M944.500 659v3.500h-3.500" stroke="#c4c4c4" fill="none" stroke-width="1.300"/><path d="M933.500 654l2.500-2h5.500v6l-2.500 2h-5.500zM933.500 654h5.500v6M939 654l2.500-2" stroke="#c4c4c4" fill="none" stroke-width="1.100"/><path d="M944 667l3-3" stroke="#fff" stroke-width="1.500"/>
<rect x="956.500" y="649.500" width="10" height="9" stroke="#c4c4c4" fill="none" stroke-width="1.200"/><path d="M961.500 649v10M956 654h11" stroke="#c4c4c4" stroke-width="1.200"/><path d="M952.500 657.500l2.500-2h5.500v5.500l-2.500 2h-5.500zM952.500 657.500h5.500v5.500" stroke="#c4c4c4" fill="#3a3a3a" stroke-width="1.100"/><path d="M966 667l3-3" stroke="#fff" stroke-width="1.500"/>
<path d="M849 676.500l3.500-4.500 3.500 4.500z" fill="#ddd"/><rect x="863.500" y="671.500" width="9" height="8" stroke="#c4c4c4" fill="none" stroke-width="1.200"/><path d="M866 674h5v4" stroke="#c4c4c4" fill="none"/>
<path d="M880.500 669v10" stroke="#2a2a2a"/><path d="M885 670.500l16 7" stroke="#c4c4c4" stroke-width="1.200"/><path d="M910 677v-3c0-2 2.500-2 2.500 0c0-2.500 2.500-2.500 2.500 0c0-2.500 2.500-2.500 2.500 0c0-1.500 2.500-1.500 2.500 0v3" stroke="#c4c4c4" fill="none" stroke-width="1.200"/><path d="M932 678c1-7 8-7 9 0" stroke="#c4c4c4" fill="none" stroke-width="1.300"/><rect x="929.500" y="671.500" width="14" height="8" stroke="#c4c4c4" fill="none"/><rect x="952.500" y="671.500" width="10" height="8" stroke="#c4c4c4" fill="none" stroke-width="1.200"/><path d="M955 676v-2.500h3" stroke="#c4c4c4" fill="none"/>
</svg>
<div class="a" style="left:0;top:689px;width:971px;height:11px;background:#1a1a15"></div>
<div class="a" style="left:620px;top:607px;width:196px;height:71px;background:#3b3b3b;border:2px solid #dcdcdc;border-radius:5px 5px 0 0;box-shadow:0 0 0 1px #8a8a8a"></div>
<div class="a" style="left:622px;top:609px;width:192px;height:22px;background:linear-gradient(#ececec,#c6c6c6 55%,#d6d6d6);border-radius:3px 3px 0 0"></div>
<div class="a" style="left:625px;top:612px;width:15px;height:15px;border-radius:3px;background:linear-gradient(135deg,#5fc8b8,#0a6a66)"></div>
<svg class="a" style="left:625px;top:612px" width="15" height="15" viewBox="0 0 15 15"><path d="M10.500 5.500a3.500 3.500 0 1 0 1 3.500h-3" stroke="#fff" fill="none" stroke-width="1.600"/></svg>
<div class="t" style="left:642px;top:614px;color:#8c8c8c;font-size:11px;font-weight:bold;text-shadow:0 0 2px #fff">Warning: Isolated Sele...</div>
<div class="a" style="left:771px;top:608px;width:38px;height:13px;background:linear-gradient(#8c8c8c,#7a7a7a);border:1px solid #b8b8b8;border-top:0;border-radius:0 0 3px 3px"></div>
<div class="t" style="left:785px;top:605px;color:#fff;font-size:13px;font-weight:bold;line-height:16px">x</div>
<div class="a" style="left:631px;top:641px;width:172px;height:29px;background:#2a6ea6;border:1px solid #1c3044"></div>
<div class="t" style="left:631px;top:648px;width:172px;text-align:center;color:#e4eef8;font-size:11px"><span class="n">Exit Isolation Mode</span></div>
<div class="a" style="left:822px;top:677px;width:149px;height:23px;background:#fff"></div>
<svg class="a" style="left:822px;top:677px" width="149" height="23" viewBox="822 677 149 23"><text x="826.500" y="694.300" font-family="'Liberation Sans',sans-serif" font-weight="bold" font-size="17" fill="#d8103c" stroke="#d8103c" stroke-width="0.900" textLength="141" lengthAdjust="spacingAndGlyphs">www.3dmax8.com</text></svg>
<svg class="a" style="left:0;top:0;pointer-events:none" width="971" height="700" viewBox="0 0 971 700" font-family="'Liberation Serif','Noto Serif CJK SC',serif" fill="#e2e2e2"><g opacity="0.21">
<text y="61" x="10.0 38.0 66.0 94.0" font-size="24.5" font-weight="600">魔天制造</text><text transform="translate(122.0 61) scale(0.7 1)" x="1.5 22.6 43.8 64.9" y="0" font-size="29" stroke="#e2e2e2" stroke-width="0.600">VRAY</text><text y="61" x="181.2 209.2 237.2 265.2" font-size="24.5" font-weight="600">技术交流</text><text transform="translate(293.2 61) scale(0.7 1)" x="1.5 24.8" y="0" font-size="29" stroke="#e2e2e2" stroke-width="0.600">QQ</text><text y="61" x="325.8" font-size="24.5" font-weight="600">群</text><text transform="translate(353.8 61) scale(0.7 1)" x="1.5 21.4 41.2 61.1 80.9 100.8 120.6 140.5" y="0" font-size="29" stroke="#e2e2e2" stroke-width="0.600">29842760</text>
<text y="126.5" x="106.0 134.0 162.0 190.0" font-size="24.5" font-weight="600">魔天制造</text><text transform="translate(218.0 126.5) scale(0.7 1)" x="1.5 22.6 43.8 64.9" y="0" font-size="29" stroke="#e2e2e2" stroke-width="0.600">VRAY</text><text y="126.5" x="277.2 305.2 333.2 361.2" font-size="24.5" font-weight="600">技术交流</text><text transform="translate(389.2 126.5) scale(0.7 1)" x="1.5 24.8" y="0" font-size="29" stroke="#e2e2e2" stroke-width="0.600">QQ</text><text y="126.5" x="421.8" font-size="24.5" font-weight="600">群</text><text transform="translate(449.8 126.5) scale(0.7 1)" x="1.5 21.4 41.2 61.1 80.9 100.8 120.6 140.5" y="0" font-size="29" stroke="#e2e2e2" stroke-width="0.600">29842760</text>
<text y="188" x="234.6 262.6 290.6 318.6" font-size="24.5" font-weight="600">魔天制造</text><text transform="translate(346.6 188) scale(0.7 1)" x="1.5 22.6 43.8 64.9" y="0" font-size="29" stroke="#e2e2e2" stroke-width="0.600">VRAY</text><text y="188" x="405.8 433.8 461.8 489.8" font-size="24.5" font-weight="600">技术交流</text><text transform="translate(517.8 188) scale(0.7 1)" x="1.5 24.8" y="0" font-size="29" stroke="#e2e2e2" stroke-width="0.600">QQ</text><text y="188" x="550.4" font-size="24.5" font-weight="600">群</text><text transform="translate(578.4 188) scale(0.7 1)" x="1.5 21.4 41.2 61.1 80.9 100.8 120.6 140.5" y="0" font-size="29" stroke="#e2e2e2" stroke-width="0.600">29842760</text>
<text y="264" x="356.7 384.7 412.7 440.7" font-size="24.5" font-weight="600">魔天制造</text><text transform="translate(468.7 264) scale(0.7 1)" x="1.5 22.6 43.8 64.9" y="0" font-size="29" stroke="#e2e2e2" stroke-width="0.600">VRAY</text><text y="264" x="527.9 555.9 583.9 611.9" font-size="24.5" font-weight="600">技术交流</text><text transform="translate(639.9 264) scale(0.7 1)" x="1.5 24.8" y="0" font-size="29" stroke="#e2e2e2" stroke-width="0.600">QQ</text><text y="264" x="672.5" font-size="24.5" font-weight="600">群</text><text transform="translate(700.5 264) scale(0.7 1)" x="1.5 21.4 41.2 61.1 80.9 100.8 120.6 140.5" y="0" font-size="29" stroke="#e2e2e2" stroke-width="0.600">29842760</text>
<text y="331" x="439.3 467.3 495.3 523.3" font-size="24.5" font-weight="600">魔天制造</text><text transform="translate(551.3 331) scale(0.7 1)" x="1.5 22.6 43.8 64.9" y="0" font-size="29" stroke="#e2e2e2" stroke-width="0.600">VRAY</text><text y="331" x="610.5 638.5 666.5 694.5" font-size="24.5" font-weight="600">技术交流</text><text transform="translate(722.5 331) scale(0.7 1)" x="1.5 24.8" y="0" font-size="29" stroke="#e2e2e2" stroke-width="0.600">QQ</text><text y="331" x="755.1" font-size="24.5" font-weight="600">群</text><text transform="translate(783.1 331) scale(0.7 1)" x="1.5 21.4 41.2 61.1 80.9 100.8 120.6 140.5" y="0" font-size="29" stroke="#e2e2e2" stroke-width="0.600">29842760</text>
<text y="410.5" x="333.0 361.0 389.0 417.0" font-size="24.5" font-weight="600">魔天制造</text><text transform="translate(445.0 410.5) scale(0.7 1)" x="1.5 22.6 43.8 64.9" y="0" font-size="29" stroke="#e2e2e2" stroke-width="0.600">VRAY</text><text y="410.5" x="504.2 532.2 560.2 588.2" font-size="24.5" font-weight="600">技术交流</text><text transform="translate(616.2 410.5) scale(0.7 1)" x="1.5 24.8" y="0" font-size="29" stroke="#e2e2e2" stroke-width="0.600">QQ</text><text y="410.5" x="648.8" font-size="24.5" font-weight="600">群</text><text transform="translate(676.8 410.5) scale(0.7 1)" x="1.5 21.4 41.2 61.1 80.9 100.8 120.6 140.5" y="0" font-size="29" stroke="#e2e2e2" stroke-width="0.600">29842760</text>
<text y="490.5" x="150.0 178.0 206.0 234.0" font-size="24.5" font-weight="600">魔天制造</text><text transform="translate(262.0 490.5) scale(0.7 1)" x="1.5 22.6 43.8 64.9" y="0" font-size="29" stroke="#e2e2e2" stroke-width="0.600">VRAY</text><text y="490.5" x="321.2 349.2 377.2 405.2" font-size="24.5" font-weight="600">技术交流</text><text transform="translate(433.2 490.5) scale(0.7 1)" x="1.5 24.8" y="0" font-size="29" stroke="#e2e2e2" stroke-width="0.600">QQ</text><text y="490.5" x="465.8" font-size="24.5" font-weight="600">群</text><text transform="translate(493.8 490.5) scale(0.7 1)" x="1.5 21.4 41.2 61.1 80.9 100.8 120.6 140.5" y="0" font-size="29" stroke="#e2e2e2" stroke-width="0.600">29842760</text>
<text y="571" x="8.5 36.5 64.5 92.5" font-size="24.5" font-weight="600">魔天制造</text><text transform="translate(120.5 571) scale(0.7 1)" x="1.5 22.6 43.8 64.9" y="0" font-size="29" stroke="#e2e2e2" stroke-width="0.600">VRAY</text><text y="571" x="179.7 207.7 235.7 263.7" font-size="24.5" font-weight="600">技术交流</text><text transform="translate(291.7 571) scale(0.7 1)" x="1.5 24.8" y="0" font-size="29" stroke="#e2e2e2" stroke-width="0.600">QQ</text><text y="571" x="324.3" font-size="24.5" font-weight="600">群</text><text transform="translate(352.3 571) scale(0.7 1)" x="1.5 21.4 41.2 61.1 80.9 100.8 120.6 140.5" y="0" font-size="29" stroke="#e2e2e2" stroke-width="0.600">29842760</text>
<text y="645.5" x="362.0 390.0 418.0 446.0" font-size="24.5" font-weight="600">魔天制造</text><text transform="translate(474.0 645.5) scale(0.7 1)" x="1.5 22.6 43.8 64.9" y="0" font-size="29" stroke="#e2e2e2" stroke-width="0.600">VRAY</text><text y="645.5" x="533.2 561.2 589.2 617.2" font-size="24.5" font-weight="600">技术交流</text><text transform="translate(645.2 645.5) scale(0.7 1)" x="1.5 24.8" y="0" font-size="29" stroke="#e2e2e2" stroke-width="0.600">QQ</text><text y="645.5" x="677.8" font-size="24.5" font-weight="600">群</text><text transform="translate(705.8 645.5) scale(0.7 1)" x="1.5 21.4 41.2 61.1 80.9 100.8 120.6 140.5" y="0" font-size="29" stroke="#e2e2e2" stroke-width="0.600">29842760</text>
</g>
<text y="610.5" font-family="'Liberation Serif',serif" font-weight="bold" font-size="31" fill="#1a1a1a" fill-opacity=".45"><tspan x="734" textLength="72" lengthAdjust="spacingAndGlyphs">www</tspan><tspan x="807.5" textLength="141" lengthAdjust="spacingAndGlyphs">.snren.com</tspan></text>
<text y="611.5" font-family="'Liberation Serif',serif" font-weight="bold" font-size="31" fill="#dcdcdc" fill-opacity=".72"><tspan x="735" textLength="72" lengthAdjust="spacingAndGlyphs">www</tspan><tspan x="808.5" textLength="141" lengthAdjust="spacingAndGlyphs">.snren.com</tspan></text>
</svg>
</body></html>
